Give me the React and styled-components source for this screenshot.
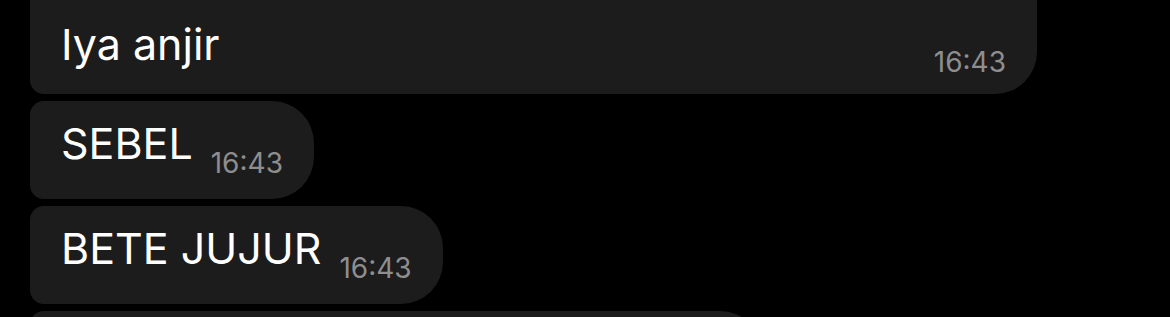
import React from 'react';
import styled, { createGlobalStyle } from 'styled-components';

const GlobalStyle = createGlobalStyle`
    html, body {
        margin: 0;
        padding: 0;
        background: #000;
        overflow: hidden;
    }
`;

const Screen = styled.div`
    width: 1170px;
    height: 317px;
    overflow: hidden;
    background: #000;
    font-family: Inter, "Liberation Sans", sans-serif;
`;

// scrolled list: first bubble starts above the visible area
const MessageList = styled.div`
    display: flex;
    flex-direction: column;
    align-items: flex-start;
    gap: 7px;
    padding-left: 30px;
    margin-top: -60px;
`;

const Bubble = styled.div`
    display: flex;
    align-items: flex-end;
    gap: 18px;
    box-sizing: border-box;
    width: ${p => (p.$width ? `${p.$width}px` : 'auto')};
    min-height: ${p => (p.$minHeight ? `${p.$minHeight}px` : '0')};
    padding: ${p => p.$padTop || 18}px 31px ${p => p.$padBottom || 22}px 31px;
    background: #1c1c1d;
    border-radius: 14px 42px 42px 14px;
`;

const Text = styled.span`
    flex: 1;
    color: #fff;
    font-size: 43px;
    line-height: 48px;
    margin-bottom: ${p => p.$lift || 10}px;
    white-space: nowrap;
`;

const Time = styled.span`
    color: #8e8e8f;
    font-size: 28px;
    line-height: 28px;
    white-space: nowrap;
`;

const messages = [
    { text: 'Iya anjir', time: '16:43', width: 1007, padTop: 60 + 20, padBottom: 18, lift: 8 },
    { text: 'SEBEL', time: '16:43' },
    { text: 'BETE JUJUR', time: '16:43' },
];

export default function App() {
    return (
        <Screen>
            <GlobalStyle />
            <MessageList>
                {messages.map((m, i) => (
                    <Bubble key={i} $width={m.width} $padTop={m.padTop} $padBottom={m.padBottom}>
                        <Text $lift={m.lift}>{m.text}</Text>
                        <Time>{m.time}</Time>
                    </Bubble>
                ))}
                <Bubble $width={732} $minHeight={98} />
            </MessageList>
        </Screen>
    );
}
